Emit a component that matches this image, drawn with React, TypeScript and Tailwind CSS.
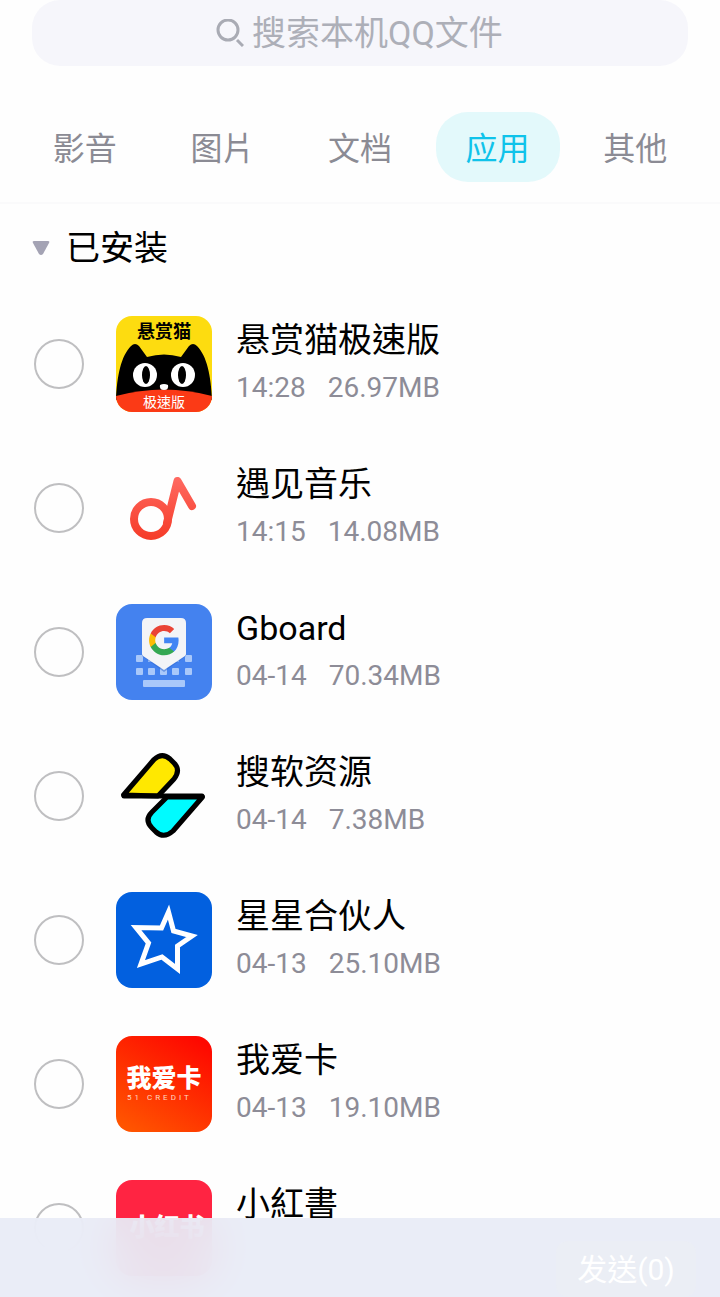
import type { ReactNode } from "react";

const tabs = ["影音", "图片", "文档", "应用", "其他"];

function BountyCatIcon() {
  return (
    <svg viewBox="0 0 96 96" className="size-24 shrink-0 rounded-2xl" aria-hidden="true">
      <rect width="96" height="96" fill="#fddc10" />
      <path
        d="M0 84C1 60 5 40 15 30Q19 26 23 30L31 41Q48 36 65 41L73 30Q77 26 81 30C91 40 95 60 96 84Z"
        fill="#000"
      />
      <path d="M0 80Q48 67 96 80V96H0Z" fill="#fb3a16" />
      <circle cx="29" cy="59" r="12" fill="#fff" />
      <circle cx="67" cy="59" r="12" fill="#fff" />
      <ellipse cx="30" cy="59" rx="4" ry="9" fill="#000" />
      <ellipse cx="66" cy="59" rx="4" ry="9" fill="#000" />
      <path d="M44 69Q48 67 52 69Q53 74 48 74Q43 74 44 69Z" fill="#fff" />
      <text x="48" y="22" textAnchor="middle" className="text-[18px] font-bold">
        悬赏猫
      </text>
      <text x="48" y="91" textAnchor="middle" fill="#fff" className="text-[14px]">
        极速版
      </text>
    </svg>
  );
}

function MusicIcon() {
  return (
    <svg viewBox="0 0 96 96" className="size-24 shrink-0" fill="none" aria-hidden="true">
      <defs>
        <linearGradient id="note" x1="0" y1="17" x2="0" y2="81" gradientUnits="userSpaceOnUse">
          <stop offset="0" stopColor="#ff6a62" />
          <stop offset="1" stopColor="#f53a26" />
        </linearGradient>
      </defs>
      <g stroke="url(#note)" strokeWidth="8" strokeLinecap="round" strokeLinejoin="round">
        <circle cx="35" cy="59" r="17" />
        <path d="M51 63L61.500 21L76 46" />
      </g>
    </svg>
  );
}

function GboardIcon() {
  return (
    <svg viewBox="0 0 96 96" className="size-24 shrink-0 rounded-2xl" aria-hidden="true">
      <rect width="96" height="96" fill="#4482ef" />
      <g fill="#a9c8fa">
        {[20, 32, 44, 56, 69].map((x) => (
          <g key={x}>
            <rect x={x} y="51" width="7" height="7" rx="1" />
            <rect x={x} y="64" width="7" height="7" rx="1" />
          </g>
        ))}
        <rect x="27" y="76" width="42" height="7" rx="1" />
      </g>
      <path d="M26 52V19Q26 14 31 14H65Q70 14 70 19V52L48 68Z" fill="#2f68cf" opacity=".5" />
      <path d="M26 50V19Q26 14 31 14H65Q70 14 70 19V50Q70 51 69 52L48 66L27 52Q26 51 26 50Z" fill="#f3f4f7" />
      <g transform="translate(31.700 19.700) scale(1.370)">
        <path fill="#4285f4" d="M22.56 12.25c0-.78-.07-1.53-.2-2.25H12v4.26h5.920c-.26 1.370-1.040 2.530-2.210 3.310v2.770h3.570c2.080-1.920 3.280-4.740 3.280-8.090z" />
        <path fill="#34a853" d="M12 23c2.970 0 5.460-.98 7.280-2.660l-3.570-2.770c-.98.66-2.230 1.060-3.710 1.060-2.860 0-5.290-1.930-6.160-4.530H2.180v2.840C3.990 20.530 7.700 23 12 23z" />
        <path fill="#fbbc05" d="M5.840 14.090c-.22-.66-.35-1.360-.35-2.090s.13-1.430.35-2.090V7.070H2.180C1.430 8.550 1 10.220 1 12s.43 3.450 1.180 4.930l2.850-2.220.81-.62z" />
        <path fill="#ea4335" d="M12 5.380c1.620 0 3.060.56 4.210 1.640l3.150-3.150C17.450 2.090 14.970 1 12 1 7.700 1 3.990 3.470 2.180 7.070l3.660 2.840c.87-2.600 3.300-4.530 6.160-4.530z" />
      </g>
    </svg>
  );
}

function SoftIcon() {
  return (
    <svg viewBox="0 0 96 96" className="size-24 shrink-0" aria-hidden="true">
      <g stroke="#000" strokeWidth="5" strokeLinejoin="round">
        <path d="M7.500 47L38 11.500Q46 4 54 11L58 15Q65 22 58 31L42 48Z" fill="#ffe800" />
        <path d="M86.500 49L57 83Q48 91 40 84L36 80Q28 72 36 64L51 49Z" fill="#00fbff" />
        <path d="M8 48H86" strokeLinecap="round" />
      </g>
    </svg>
  );
}

function StarIcon() {
  return (
    <svg viewBox="0 0 96 96" className="size-24 shrink-0 rounded-2xl" aria-hidden="true">
      <rect width="96" height="96" fill="#0260df" />
      <path
        d="M52.500 20L57.500 39L76 44L61.500 54V77L46 65L25 72L32.500 51L20 35.500L45.500 36Z"
        fill="none"
        stroke="#fff"
        strokeWidth="5"
        strokeMiterlimit="8"
      />
    </svg>
  );
}

function CreditIcon() {
  return (
    <svg viewBox="0 0 96 96" className="size-24 shrink-0 rounded-2xl" aria-hidden="true">
      <defs>
        <linearGradient id="credit" x1=".8" y1="0" x2=".2" y2="1">
          <stop offset="0" stopColor="#fe0800" />
          <stop offset="1" stopColor="#ff5400" />
        </linearGradient>
      </defs>
      <rect width="96" height="96" fill="url(#credit)" />
      <text x="48" y="51" textAnchor="middle" fill="#fff" className="text-[25px] font-black">
        我爱卡
      </text>
      <text x="11" y="64" fill="#ffd9c4" className="text-[8px] tracking-[3px]">
        51 CREDIT
      </text>
    </svg>
  );
}

function RedBookIcon() {
  return (
    <svg viewBox="0 0 96 96" className="size-24 shrink-0 rounded-2xl" aria-hidden="true">
      <rect width="96" height="96" fill="#ff2442" />
      <text x="51" y="56" textAnchor="middle" fill="#fff" className="text-[25px] font-black">
        小红书
      </text>
    </svg>
  );
}

const apps: { name: string; time: string; size: string; icon: ReactNode }[] = [
  { name: "悬赏猫极速版", time: "14:28", size: "26.97MB", icon: <BountyCatIcon /> },
  { name: "遇见音乐", time: "14:15", size: "14.08MB", icon: <MusicIcon /> },
  { name: "Gboard", time: "04-14", size: "70.34MB", icon: <GboardIcon /> },
  { name: "搜软资源", time: "04-14", size: "7.38MB", icon: <SoftIcon /> },
  { name: "星星合伙人", time: "04-13", size: "25.10MB", icon: <StarIcon /> },
  { name: "我爱卡", time: "04-13", size: "19.10MB", icon: <CreditIcon /> },
  { name: "小紅書", time: "", size: "", icon: <RedBookIcon /> },
];

export default function App() {
  return (
    <div className="relative flex h-screen flex-col overflow-hidden bg-[#fefefe] font-[Roboto,'Noto_Sans_CJK_TC',sans-serif] text-black">
      <header className="border-b-2 border-[#fafafb] pb-5">
        <label className="mx-8 flex h-[66px] items-center justify-center gap-2 rounded-[28px] bg-[#f6f6fb]">
          <svg viewBox="0 0 28 28" className="size-7 shrink-0" fill="none" stroke="#a9abb4" strokeWidth="3" aria-hidden="true">
            <circle cx="12" cy="11" r="10" />
            <path d="M21 21L27 27" />
          </svg>
          <input
            type="text"
            aria-label="搜索本机QQ文件"
            placeholder="搜索本机QQ文件"
            className="h-12 w-[252px] bg-transparent text-[34px] outline-none placeholder:text-[#adafb8]"
          />
        </label>

        <nav className="mt-[46px] grid grid-cols-5 justify-items-center px-4">
          {tabs.map((tab) => (
            <button
              key={tab}
              type="button"
              className={
                tab === "应用"
                  ? "h-[70px] w-[124px] rounded-[32px] bg-[#e3f9fb] pt-1 text-[32px] text-[#0fc3ea]"
                  : "h-[70px] w-[124px] pt-1 text-[32px] text-[#8b8b94]"
              }
            >
              {tab}
            </button>
          ))}
        </nav>
      </header>

      <main className="min-h-0 flex-1 overflow-y-auto [scrollbar-width:none]">
        <h2>
          <button type="button" className="flex h-[88px] items-center gap-4 px-8 text-[34px]">
            <svg viewBox="0 0 18 16" className="h-4 w-[18px]" fill="#a4a3b4" aria-hidden="true">
              <path d="M2 1H16Q18 1 17 3L11 14Q9 16 7 14L1 3Q0 1 2 1Z" />
            </svg>
            已安装
          </button>
        </h2>

        <ul>
          {apps.map((app) => (
            <li key={app.name}>
              <label className="flex h-36 items-center pr-8 pl-[34px]">
                <input
                  type="checkbox"
                  className="mr-8 size-[50px] shrink-0 appearance-none rounded-full border-2 border-[#bfbfc1] checked:border-[#0fc3ea] checked:bg-[#0fc3ea]"
                />
                {app.icon}
                <span className="ml-6 h-24 min-w-0">
                  <span className="block truncate text-[34px] leading-[48px]">{app.name}</span>
                  <span className="flex gap-[22px] text-[28px] leading-[48px] text-[#8d8c97]">
                    <span>{app.time}</span>
                    <span>{app.size}</span>
                  </span>
                </span>
              </label>
            </li>
          ))}
        </ul>
      </main>

      <footer className="absolute inset-x-0 bottom-0 flex h-[79px] items-end justify-end bg-[#e8ecf6]/92 px-6 backdrop-blur-xl">
        <button type="button" className="h-14 w-[140px] rounded-xl bg-[#ebeef5] text-[30px] text-white">
          发送(0)
        </button>
      </footer>
    </div>
  );
}
